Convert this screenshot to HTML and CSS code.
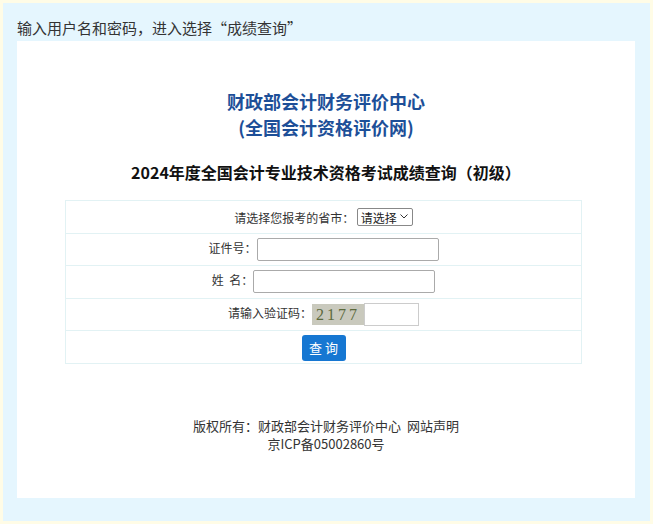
FILE: index.html
```html
<!DOCTYPE html>
<html>

<head>
  <title>成绩查询</title>
  <link rel="stylesheet" href="styles.css">
</head>

<body>
  <div class="page">
    <div class="tip">输入用户名和密码，进入选择“成绩查询”</div>
    <div class="panel">
      <h1 class="org">财政部会计财务评价中心<br>(全国会计资格评价网)</h1>
      <h2 class="title">2024年度全国会计专业技术资格考试成绩查询（初级）</h2>

      <table class="query">
        <tr>
          <td>请选择您报考的省市：
            <select class="city">
              <option>请选择</option>
            </select>
          </td>
        </tr>
        <tr>
          <td>证件号：<input type="text" class="field"></td>
        </tr>
        <tr>
          <td>姓&nbsp;&nbsp;名：<input type="text" class="field"></td>
        </tr>
        <tr>
          <td>请输入验证码：<span class="captcha">2177</span><input type="text" class="code"></td>
        </tr>
        <tr>
          <td><button class="btn">查 询</button></td>
        </tr>
      </table>

      <div class="footer">
        <p>版权所有：财政部会计财务评价中心&nbsp;&nbsp;网站声明</p>
        <p>京ICP备05002860号</p>
      </div>
    </div>
  </div>
</body>

</html>
```

FILE: styles.css
```css
* {
  box-sizing: border-box;
}

body {
  margin: 0;
  font-family: "Noto Sans CJK SC", "Liberation Sans", sans-serif;
  color: #333;
}

.page {
  height: 524px;
  border: 3px solid #fffce6;
  background-color: #e5f6fe;
  padding: 15px 15px 0 14px;
}

.tip {
  font-size: 15px;
  line-height: 20px;
  height: 23px;
  color: #333;
}

.panel {
  background-color: #fff;
  height: 457px;
  padding-top: 47px;
}

.org {
  margin: 0;
  text-align: center;
  color: #1d4f98;
  font-size: 18px;
  line-height: 26px;
  font-weight: bold;
}

.title {
  margin: 20px 0 16px;
  text-align: center;
  color: #111;
  font-size: 16px;
  line-height: 24px;
  font-weight: bold;
}

.query {
  width: 517px;
  margin-left: 48px;
  border-collapse: collapse;
  font-size: 12px;
  color: #333;
}

.query td {
  border: 1px solid #e2f2f4;
  text-align: center;
  height: 32.6px;
  padding: 0;
}

.city {
  appearance: none;
  font-family: inherit;
  font-size: 12px;
  color: #222;
  height: 18px;
  width: 56px;
  padding: 0 14px 0 3px;
  border: 1px solid #888;
  border-radius: 2px;
  background: #fff url("data:image/svg+xml,%3Csvg xmlns='http://www.w3.org/2000/svg' width='8' height='5'%3E%3Cpath d='M0.5 0.5L4 4L7.5 0.5' fill='none' stroke='%23333' stroke-width='1'/%3E%3C/svg%3E") no-repeat right 4px center;
}

.field {
  width: 182px;
  height: 23px;
  border: 1px solid #aaa;
  border-radius: 2px;
  vertical-align: middle;
}

.captcha {
  display: inline-block;
  width: 52px;
  height: 21px;
  line-height: 21px;
  vertical-align: middle;
  background-color: #c9c9bd;
  font-family: "Liberation Serif", serif;
  font-size: 16px;
  letter-spacing: 3px;
  color: #5c6a3c;
  text-align: center;
}

.code {
  width: 55px;
  height: 23px;
  border: 1px solid #ccc;
  vertical-align: middle;
}

.btn {
  font-family: inherit;
  background-color: #1677d2;
  color: #fff;
  border: none;
  border-radius: 3px;
  font-size: 13px;
  width: 44px;
  height: 26px;
  padding: 0;
  margin-top: 1px;
}

.footer {
  margin-top: 53px;
  text-align: center;
  font-size: 13px;
  color: #333;
}

.footer p {
  margin: 0;
  line-height: 18px;
}
```
